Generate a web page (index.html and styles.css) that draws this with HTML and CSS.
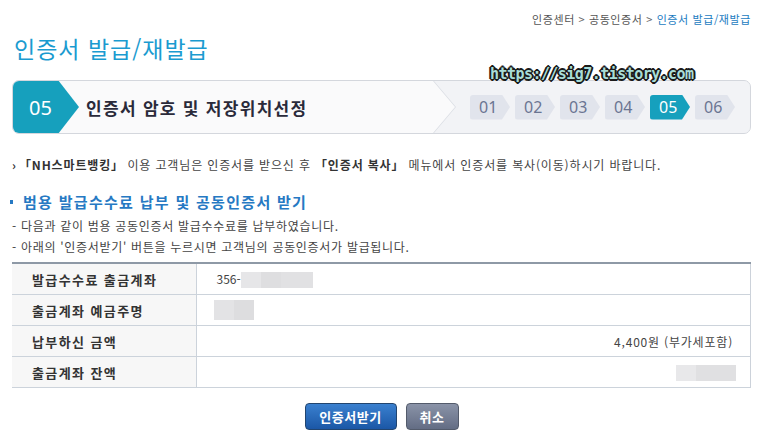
FILE: index.html
```html
<!DOCTYPE html>
<html lang="ko">
<head>
<meta charset="utf-8">
<title>인증서 발급/재발급</title>
<link rel="stylesheet" href="styles.css">
</head>
<body>
<div class="page">
  <div class="crumb">인증센터 <span class="gt">&gt;</span> 공동인증서 <span class="gt">&gt;</span> <span class="cur">인증서 발급/재발급</span></div>
  <h1 class="title">인증서 발급/재발급</h1>
  <div class="watermark">https://sig7.tistory.com</div>

  <div class="stepbox">
    <div class="stepnum">05</div>
    <div class="steptitle">인증서 암호 및 저장위치선정</div>
    <div class="steps">
      <div class="chip">01</div>
      <div class="chip">02</div>
      <div class="chip">03</div>
      <div class="chip">04</div>
      <div class="chip on">05</div>
      <div class="chip">06</div>
    </div>
  </div>

  <p class="notice"><span class="arrow">›</span><b>「NH스마트뱅킹」</b> 이용 고객님은 인증서를 받으신 후 <b>「인증서 복사」</b> 메뉴에서 인증서를 복사(이동)하시기 바랍니다.</p>

  <h2 class="section"><span class="sq"></span>범용 발급수수료 납부 및 공동인증서 받기</h2>
  <p class="desc">- 다음과 같이 범용 공동인증서 발급수수료를 납부하였습니다.</p>
  <p class="desc">- 아래의 '인증서받기' 버튼을 누르시면 고객님의 공동인증서가 발급됩니다.</p>

  <table class="info">
    <tr>
      <th>발급수수료 출금계좌</th>
      <td>356-<span class="blur b1"></span></td>
    </tr>
    <tr>
      <th>출금계좌 예금주명</th>
      <td class="pl"><span class="blur b2"></span></td>
    </tr>
    <tr>
      <th>납부하신 금액</th>
      <td class="right">4,400원 (부가세포함)</td>
    </tr>
    <tr>
      <th>출금계좌 잔액</th>
      <td class="right tight"><span class="blur b3"></span></td>
    </tr>
  </table>

  <div class="btns">
    <button class="btn primary">인증서받기</button>
    <button class="btn gray">취소</button>
  </div>
</div>
</body>
</html>
```

FILE: styles.css
```css
html, body {
  margin: 0;
  padding: 0;
  background: #ffffff;
}
body {
  font-family: "Noto Sans CJK KR", "Noto Sans", sans-serif;
  color: #444;
}
.page {
  position: relative;
  width: 739px;
  padding: 11px 6px 0 12px;
}
.crumb {
  text-align: right;
  font-size: 11px;
  line-height: 16px;
  color: #555;
  letter-spacing: 0.6px;
}
.crumb .gt { color: #666; }
.crumb .cur { color: #1b7bbf; }
.title {
  margin: 6px 0 0 2px;
  font-size: 23px;
  line-height: 30px;
  font-weight: 400;
  color: #1b9bd0;
  letter-spacing: 1px;
}
.watermark {
  position: absolute;
  left: 490px;
  top: 64px;
  font-family: "DejaVu Sans Mono", monospace;
  font-weight: bold;
  font-size: 15px;
  line-height: 20px;
  letter-spacing: -0.55px;
  color: #a8ddd7;
  text-shadow: -1px -1px 0 #1a1a1a, 1px -1px 0 #1a1a1a, -1px 1px 0 #1a1a1a, 1px 1px 0 #1a1a1a, 0 2px 0 #1a1a1a, 2px 0 0 #1a1a1a, -2px 0 0 #1a1a1a, 0 -2px 0 #1a1a1a;
  z-index: 5;
}
.stepbox {
  margin-top: 17px;
  height: 54px;
  box-sizing: border-box;
  border: 1px solid #d4d7dd;
  border-radius: 7px;
  overflow: hidden;
  background: #fafafb;
  display: flex;
  align-items: center;
}
.stepnum {
  align-self: stretch;
  width: 67px;
  margin: -1px 0 -1px -1px;
  box-sizing: border-box;
  padding-left: 17px;
  background: #16a0bd;
  clip-path: polygon(0 0, 46px 0, 67px 50%, 46px 100%, 0 100%);
  border-radius: 7px 0 0 7px;
  color: #fff;
  font-family: "Noto Sans", sans-serif;
  font-size: 20px;
  display: flex;
  align-items: center;
}
.steptitle {
  margin-left: 7px;
  font-size: 17px;
  font-weight: 700;
  color: #2a2a3a;
  letter-spacing: 1.3px;
}
.steps {
  margin-left: auto;
  align-self: stretch;
  width: 317px;
  position: relative;
  background: #dcdfe5;
  clip-path: polygon(0 0, 100% 0, 100% 100%, 0 100%, 22px 50%);
  display: flex;
  align-items: center;
  justify-content: flex-end;
  gap: 5px;
  padding-right: 15px;
  box-sizing: border-box;
}
.steps::before {
  content: "";
  position: absolute;
  inset: 0;
  left: 1px;
  background: #f2f3f6;
  clip-path: polygon(0 0, 100% 0, 100% 100%, 0 100%, 22px 50%);
}
.chip {
  position: relative;
  width: 40px;
  height: 25px;
  box-sizing: border-box;
  padding-left: 9px;
  background: #e1e4ec;
  color: #6b7592;
  font-family: "Noto Sans", sans-serif;
  font-size: 16px;
  line-height: 25px;
  clip-path: polygon(0 0, 32px 0, 40px 50%, 32px 100%, 0 100%);
  border-radius: 3px 0 0 3px;
}
.chip.on {
  background: #16a0bd;
  color: #fff;
}
.notice {
  margin: 22px 0 0 0;
  font-size: 12px;
  line-height: 18px;
  color: #444;
  letter-spacing: 0.85px;
}
.notice .arrow {
  display: inline-block;
  width: 7px;
  font-weight: 700;
  color: #333;
}
.notice b {
  color: #333;
}
.section {
  margin: 18px 0 0 -2px;
  font-size: 15px;
  line-height: 20px;
  font-weight: 700;
  color: #2679c3;
  letter-spacing: 1.3px;
  display: flex;
  align-items: center;
}
.section .sq {
  width: 3px;
  height: 4px;
  background: #2679c3;
  margin-right: 10px;
}
.desc {
  margin: 0;
  font-size: 12px;
  line-height: 21px;
  color: #444;
  letter-spacing: 0.7px;
}
.section + .desc {
  margin-top: 3px;
}
.info {
  margin-top: 5px;
  width: 100%;
  border-collapse: collapse;
  border-top: 2px solid #8e99a6;
  border-bottom: 1px solid #a3abb6;
  border-right: 1px solid #ccd2da;
  font-size: 12px;
}
.info th, .info td {
  height: 30px;
  padding: 0;
  border-bottom: 1px solid #ccd3db;
}
.info th {
  width: 184px;
  box-sizing: border-box;
  padding-left: 20px;
  background: #f7f7f7;
  border-right: 1px solid #ccd3db;
  text-align: left;
  font-size: 13px;
  font-weight: 700;
  color: #333;
  letter-spacing: 1.4px;
}
.info td {
  padding-left: 20px;
  color: #444;
  vertical-align: middle;
}
.info td.pl { padding-left: 17px; }
.info td.right {
  text-align: right;
  padding-right: 17px;
  letter-spacing: 0.8px;
}
.info td.tight { padding-right: 14px; }
.blur {
  display: inline-block;
  vertical-align: middle;
  background: #e2e2e4;
}
.b1 {
  width: 72px;
  height: 16px;
  background: linear-gradient(90deg, #e6e6e8 0 20px, #dedee0 20px 40px, #e1e1e3 40px);
}
.b2 {
  width: 40px;
  height: 20px;
  background: linear-gradient(90deg, #e3e3e5 0 20px, #dddddf 20px);
}
.b3 {
  width: 60px;
  height: 16px;
  background: linear-gradient(90deg, #e8e8ea 0 20px, #e0e0e2 20px);
}
.btns {
  margin-top: 15px;
  display: flex;
  justify-content: center;
  gap: 9px;
}
.btn {
  height: 27px;
  box-sizing: border-box;
  border-radius: 4px;
  font-family: "Noto Sans CJK KR", sans-serif;
  font-size: 13px;
  font-weight: 700;
  color: #fff;
  padding: 0;
  letter-spacing: 0.5px;
  cursor: pointer;
}
.btn.primary {
  width: 92px;
  background: linear-gradient(#3a80cf, #1b57a6);
  border: 1px solid #22456f;
}
.btn.gray {
  width: 53px;
  background: linear-gradient(#8a93a8, #636d84);
  border: 1px solid #535b6b;
}
```
